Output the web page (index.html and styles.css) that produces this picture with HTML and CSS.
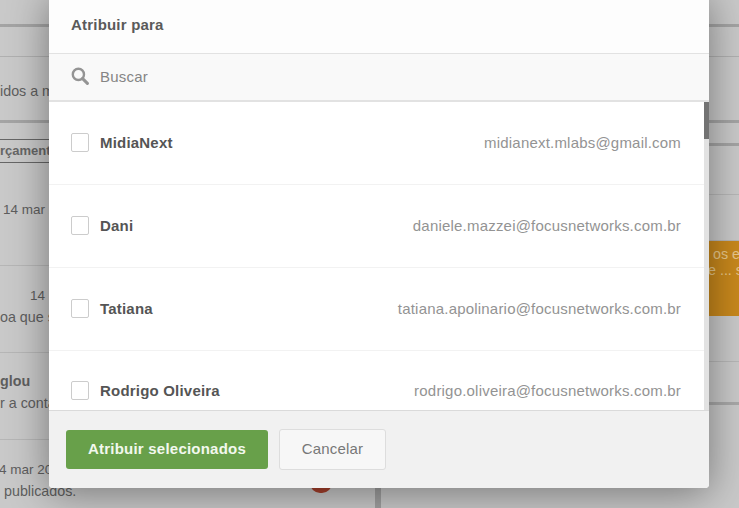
FILE: index.html
```html
<!DOCTYPE html>
<html lang="pt-BR">
<head>
<meta charset="utf-8">
<title>Atribuir para</title>
<link rel="stylesheet" href="styles.css">
</head>
<body>
<div class="page">
  <div class="col-left">
    <div class="bg h27"></div>
    <div class="bg h30"></div>
    <div class="bg h66 text-row"><span>idos a membros</span></div>
    <div class="bg h16"></div>
    <div class="tab"><span>rçamento</span></div>
    <div class="bg h16"></div>
    <div class="bg h87 item"><span class="date">14 mar 2022</span></div>
    <div class="bg h87 item"><span class="date d2">14 mar 2022</span><span class="line">oa que solicitou</span></div>
    <div class="bg h87 item"><span class="who">glou</span><span class="line">r a conta</span></div>
    <div class="bg last"><span class="date d3">4 mar 2022</span><span class="line">publicados.</span><i class="badge"></i></div>
  </div>
  <div class="col-right">
    <div class="bg h27"></div>
    <div class="bg h30"></div>
    <div class="bg h66"></div>
    <div class="bg h23"></div>
    <div class="bg h49"></div>
    <div class="bg h46"></div>
    <div class="notice"><span>os e</span><span class="notice-second">e ... s</span></div>
    <div class="bg h46"></div>
    <div class="bg h43 strong"></div>
  </div>
</div>

<div class="modal" role="dialog" aria-label="Atribuir para">
  <header class="modal-head">Atribuir para</header>
  <div class="search">
    <svg class="search-icon" viewBox="0 0 18 18" width="18" height="18" aria-hidden="true">
      <circle cx="7.4" cy="7.4" r="5.6" fill="none" stroke="#949494" stroke-width="2.4"/>
      <path d="M11.6 11.6 16.4 16.4" stroke="#949494" stroke-width="3" stroke-linecap="round"/>
    </svg>
    <span>Buscar</span>
  </div>
  <div class="list-wrap">
    <ul class="list">
      <li class="row"><i class="check"></i><b>MidiaNext</b><span>midianext.mlabs@gmail.com</span></li>
      <li class="row"><i class="check"></i><b>Dani</b><span>daniele.mazzei@focusnetworks.com.br</span></li>
      <li class="row"><i class="check"></i><b>Tatiana</b><span>tatiana.apolinario@focusnetworks.com.br</span></li>
      <li class="row"><i class="check"></i><b>Rodrigo Oliveira</b><span>rodrigo.oliveira@focusnetworks.com.br</span></li>
    </ul>
    <div class="scrollbar"><div class="thumb"></div></div>
  </div>
  <footer class="modal-foot">
    <button class="btn-primary">Atribuir selecionados</button>
    <button class="btn-cancel">Cancelar</button>
  </footer>
</div>
</body>
</html>
```
FILE: styles.css
```css
* { box-sizing: border-box; }
html, body { margin: 0; height: 100%; overflow: hidden; }
body {
  width: 739px;
  height: 508px;
  position: relative;
  font-family: "Liberation Sans", Arial, sans-serif;
  background: #c9c9c9;
  color: #555;
}
.page { display: flex; height: 508px; background: #c9c9c9; }
.col-left { width: 381px; border-right: 6px solid #a0a0a0; overflow: hidden; }
.col-right { flex: 1; overflow: hidden; }
.bg { font-size: 14.3px; color: #5e5e5e; border-bottom: 1px solid #b6b6b6; position: relative; white-space: nowrap; }
.h27 { height: 27px; border-bottom: 3px solid #a4a4a4; }
.h30 { height: 30px; border-bottom: 1px solid #b0b0b0; }
.h66 { height: 66px; border-bottom: 3px solid #a4a4a4; }
.h16 { height: 16px; border: 0; }
.h23 { height: 23px; border-bottom: 3px solid #a4a4a4; }
.h49 { height: 49px; }
.h46 { height: 46px; }
.h43 { height: 43px; }
.h87 { height: 87px; }
.strong { border-bottom: 3px solid #a8a8a8; }
.text-row { display: flex; align-items: center; padding-top: 4px; }
.tab {
  height: 24px; border-top: 1px solid #666; border-bottom: 1px solid #666;
  font-size: 13px; font-weight: bold; color: #666; line-height: 22px;
  white-space: nowrap; overflow: hidden;
}
.item { display: flex; flex-direction: column; }
.date { margin: 23px 0 0 3px; font-size: 13.5px; }
.date.d2 { margin: 22px 0 0 30px; }
.date.d3 { margin: 22px 0 0 -1px; }
.line { margin: 6px 0 0 0; }
.who { font-weight: bold; margin: 20px 0 0 0; }
.last { display: flex; flex-direction: column; height: 80px; border: 0; }
.last .line { margin: 6px 0 0 4px; }
.badge { position: absolute; left: 310px; top: 33px; width: 22px; height: 20px; border-radius: 10px; background: #a8402c; }
.notice {
  height: 75px; padding: 5px 0 0 332px; background: #c8881c; color: #e8c88c;
  font-size: 14.3px; line-height: 16px; display: flex; flex-direction: column; white-space: nowrap;
}
.notice span { display: block; }
.notice-second { margin-left: -5px; }
.modal {
  position: absolute; left: 49px; top: -6px; width: 660px; height: 494px;
  display: flex; flex-direction: column;
  background: #fff; border-radius: 0 0 4px 4px; overflow: hidden;
  box-shadow: 0 5px 40px rgba(0,0,0,.42);
  letter-spacing: .2px;
}
.modal-head {
  height: 60px; padding: 6px 22px 0; background: #fdfdfd;
  border-bottom: 1px solid #e2e2e2;
  font-size: 15px; font-weight: bold; line-height: 49px; color: #5a5a5a;
}
.search {
  height: 48px; display: flex; align-items: center; gap: 11px; padding: 0 22px 2px;
  background: #f9f9f9; border-bottom: 2px solid #e2e2e2;
  font-size: 15px; color: #858585;
}
.search-icon { flex: none; }
.list-wrap { height: 308px; display: flex; overflow: hidden; }
.list { list-style: none; margin: 0; padding: 0; flex: 1; }
.row {
  height: 83px; display: flex; align-items: center; padding: 0 23px 1px 22px;
  border-bottom: 1px solid #f2f2f2;
}
.row:last-child { padding-bottom: 3px; }
.row b { margin-left: 11px; font-size: 15px; color: #555; }
.row span { margin-left: auto; font-size: 15px; color: #939393; }
.check { flex: none; width: 18px; height: 19px; border: 1px solid #ccc; border-radius: 2px; background: #fff; }
.scrollbar { width: 5px; background: #e2e2e2; }
.thumb { height: 37px; background: #737373; }
.modal-foot {
  flex: 1; display: flex; gap: 11px; align-items: flex-start; padding: 19px 17px 0;
  background: #f1f1f1; border-top: 1px solid #dadada;
}
.btn-primary {
  width: 202px; height: 39px; border: 0; border-radius: 3px; background: #68a04a; color: #f2f8ee;
  font: bold 15px "Liberation Sans", Arial, sans-serif; letter-spacing: .22px; padding-bottom: 3px;
}
.btn-cancel {
  width: 107px; height: 41px; margin-top: -1px; border: 1px solid #ddd; border-radius: 3px; background: #f7f7f7; color: #777;
  font: 15px "Liberation Sans", Arial, sans-serif; letter-spacing: .2px; padding-bottom: 3px;
}
```
